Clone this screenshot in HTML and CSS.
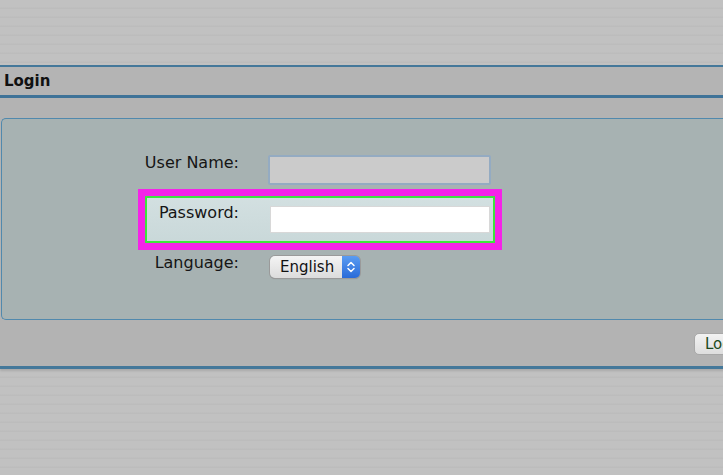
FILE: index.html
```html
<!DOCTYPE html>
<html lang="en">
<head>
  <meta charset="UTF-8" />
  <meta name="viewport" content="width=device-width, initial-scale=1" />
  <title>Login</title>
  <link rel="stylesheet" href="styles.css">
</head>
<body>
  <div class="page">
    <div class="top-space"></div>

    <div class="title-bar">Login</div>

    <div class="login-section">
      <div class="panel">
        <div class="form-row">
          <label class="row-label" for="userName">User Name:</label>
          <input class="text-input disabled" id="userName" type="text" />
        </div>
        <div class="form-row highlight">
          <label class="row-label" for="password">Password:</label>
          <input class="text-input" id="password" type="password" />
        </div>
        <div class="form-row">
          <span class="row-label">Language:</span>
          <div class="select-box">
            <span class="select-value">English</span>
            <span class="select-arrows">
              <svg width="10" height="14" viewBox="0 0 10 14">
                <path d="M2 5.5 L5 2.5 L8 5.5" fill="none" stroke="#fff" stroke-width="1.5" stroke-linecap="round" stroke-linejoin="round"/>
                <path d="M2 8.5 L5 11.5 L8 8.5" fill="none" stroke="#fff" stroke-width="1.5" stroke-linecap="round" stroke-linejoin="round"/>
              </svg>
            </span>
          </div>
        </div>
      </div>

      <div class="actions">
        <button class="login-btn">Login</button>
      </div>
    </div>

    <div class="bottom-space"></div>
  </div>
</body>
</html>
```

FILE: styles.css
```css
html, body {
  margin: 0;
  padding: 0;
  overflow: hidden;
}
body {
  font-family: "DejaVu Sans", Verdana, sans-serif;
  background: #bfbfbf;
  color: #141414;
}
.page {
  width: 770px;
  height: 475px;
  background: repeating-linear-gradient(to bottom, #c1c1c1 0px, #c1c1c1 7px, #bcbcbc 8px, #bcbcbc 9px);
}
.top-space {
  height: 65px;
}

.title-bar {
  height: 28px;
  line-height: 28px;
  padding-left: 4px;
  background: #b4b4b4;
  border-top: 2px solid #44789a;
  border-bottom: 3px solid #3f7398;
  box-shadow: 0 1px 0 #8fb6cf;
  font-weight: bold;
  font-size: 15px;
  color: #111;
}

.login-section {
  background: #b3b3b3;
  padding-top: 20px;
  border-bottom: 3px solid #44789a;
  box-shadow: 0 2px 2px rgba(0,0,0,0.12);
}

.panel {
  margin-left: 1px;
  height: 163px;
  padding-top: 37px;
  background: #a7b2b2;
  border: 1px solid #5189ad;
  border-right: none;
  border-radius: 5px 0 0 5px;
  display: flex;
  flex-direction: column;
  gap: 5px;
}

.form-row {
  display: flex;
  align-items: flex-start;
  margin-left: 136px;
  width: 364px;
  padding: 0 9px;
  box-sizing: border-box;
}
.form-row.highlight {
  border: 7px solid #f523e8;
  padding: 10px 2px;
  outline: 2px solid #3fe43f;
  outline-offset: -9px;
  background: linear-gradient(to bottom, #d3e0e1, #c9d8d9);
}
.row-label {
  flex: none;
  width: 98px;
  margin-left: -6px;
  margin-top: -3px;
  text-align: right;
  white-space: nowrap;
  font-size: 16px;
  line-height: 20px;
  color: #151515;
}
.text-input {
  flex: none;
  margin-left: 31px;
  width: 220px;
  height: 27px;
  box-sizing: border-box;
  border: 1px solid #d8d8d8;
  background: #fff;
  padding: 0 4px;
}
.text-input.disabled {
  margin-left: 29px;
  margin-top: -1px;
  margin-bottom: -1px;
  width: 223px;
  height: 30px;
  background: #cbcbcb;
  border: 2px solid #94abc2;
  border-radius: 2px;
}
.form-row.highlight + .form-row {
  margin-top: 1px;
}

.select-box {
  flex: none;
  margin-left: 31px;
  width: 90px;
  height: 22px;
  display: flex;
  border-radius: 5px;
  overflow: hidden;
  box-shadow: 0 0 0 1px #9a9a9a, 0 1px 1px rgba(0,0,0,0.2);
}
.select-value {
  flex: 1;
  background: linear-gradient(to bottom, #f4f4f4, #dcdcdc);
  font-size: 15px;
  line-height: 23px;
  padding-left: 10px;
  color: #111;
}
.select-arrows {
  width: 18px;
  background: linear-gradient(to bottom, #5a9cf2, #2a6bd8);
  display: flex;
  align-items: center;
  justify-content: center;
}

.actions {
  height: 46px;
  display: flex;
  align-items: center;
}
.login-btn {
  margin-left: 694px;
  margin-top: 1px;
  height: 22px;
  padding: 0 10px;
  border: 1px solid #a8a8a8;
  border-radius: 5px;
  background: linear-gradient(to bottom, #f2f2f2, #dedede);
  color: #1d4a1d;
  font-family: "DejaVu Sans", Verdana, sans-serif;
  font-size: 15px;
}
```
